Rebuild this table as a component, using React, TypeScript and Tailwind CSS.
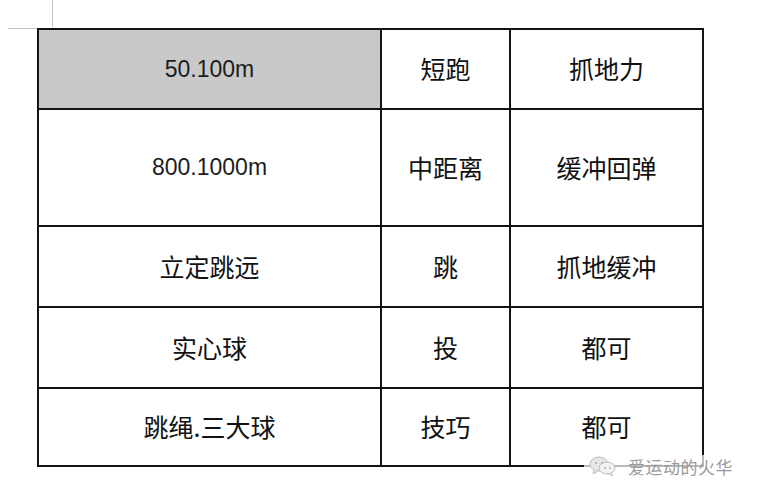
import React from "react";

const cjk = { fontFamily: '"Noto Sans CJK SC", "Noto Sans", sans-serif' };
const latin = { fontFamily: '"Liberation Sans", Arial, sans-serif' };

type Row = { a: string; b: string; c: string; h: string; gray?: boolean; latin?: boolean };

const rows: Row[] = [
  { a: "50.100m", b: "短跑", c: "抓地力", h: "h-[78px]", gray: true, latin: true },
  { a: "800.1000m", b: "中距离", c: "缓冲回弹", h: "h-[115px]", latin: true },
  { a: "立定跳远", b: "跳", c: "抓地缓冲", h: "h-[79px]" },
  { a: "实心球", b: "投", c: "都可", h: "h-[79px]" },
  { a: "跳绳.三大球", b: "技巧", c: "都可", h: "h-[76px]" },
];

function Cell({ text, gray, isLatin, h }: { text: string; gray?: boolean; isLatin?: boolean; h: string }) {
  return (
    <div
      className={`${h} flex items-center justify-center ${gray ? "bg-[#c9c9c9]" : "bg-white"} ${
        isLatin ? "text-[23px] text-[#1c1c1c]" : "text-[25px] text-[#111]"
      }`}
      style={isLatin ? latin : cjk}
    >
      {text}
    </div>
  );
}

export default function App() {
  return (
    <div className="relative w-[760px] h-[500px] bg-white overflow-hidden flex flex-col">
      {/* top crop mark */}
      <div className="h-[28px] pl-[52px] shrink-0">
        <div className="w-px h-[27px] bg-[#c4c4c4]" />
      </div>

      <div className="flex items-start pl-[8px]">
        {/* left crop mark */}
        <div className="w-[29px] h-px bg-[#c4c4c4] shrink-0" />
        <div className="grid grid-cols-[341px_127px_191px] gap-[2px] p-[2px] bg-[#141414] w-[667px]">
          {rows.map((r, i) => (
            <React.Fragment key={i}>
              <Cell text={r.a} gray={r.gray} isLatin={r.latin} h={r.h} />
              <Cell text={r.b} h={r.h} />
              <Cell text={r.c} h={r.h} />
            </React.Fragment>
          ))}
        </div>
      </div>

      {/* watermark */}
      <div className="absolute left-[584px] top-[455px] flex items-center gap-[10px] bg-white/70 px-[4px]">
        <svg width="30" height="22" viewBox="0 0 30 22" fill="none">
          <ellipse cx="11" cy="9" rx="9" ry="7" fill="#e6e6e6" stroke="#bdbdbd" strokeWidth="1" />
          <path d="M6 15 L5 19 L10 16" fill="#e6e6e6" stroke="#bdbdbd" strokeWidth="1" />
          <ellipse cx="19" cy="13" rx="8" ry="6" fill="#f2f2f2" stroke="#bdbdbd" strokeWidth="1" />
          <path d="M23 18 L25 21 L21 19" fill="#f2f2f2" stroke="#bdbdbd" strokeWidth="1" />
          <circle cx="8" cy="8" r="1" fill="#aaa" />
          <circle cx="14" cy="8" r="1" fill="#aaa" />
          <circle cx="17" cy="13" r="0.9" fill="#aaa" />
          <circle cx="22" cy="13" r="0.9" fill="#aaa" />
        </svg>
        <span className="text-[17px] leading-none text-[#9a9a9a] tracking-[0.5px]" style={cjk}>
          爱运动的火华
        </span>
      </div>
    </div>
  );
}
